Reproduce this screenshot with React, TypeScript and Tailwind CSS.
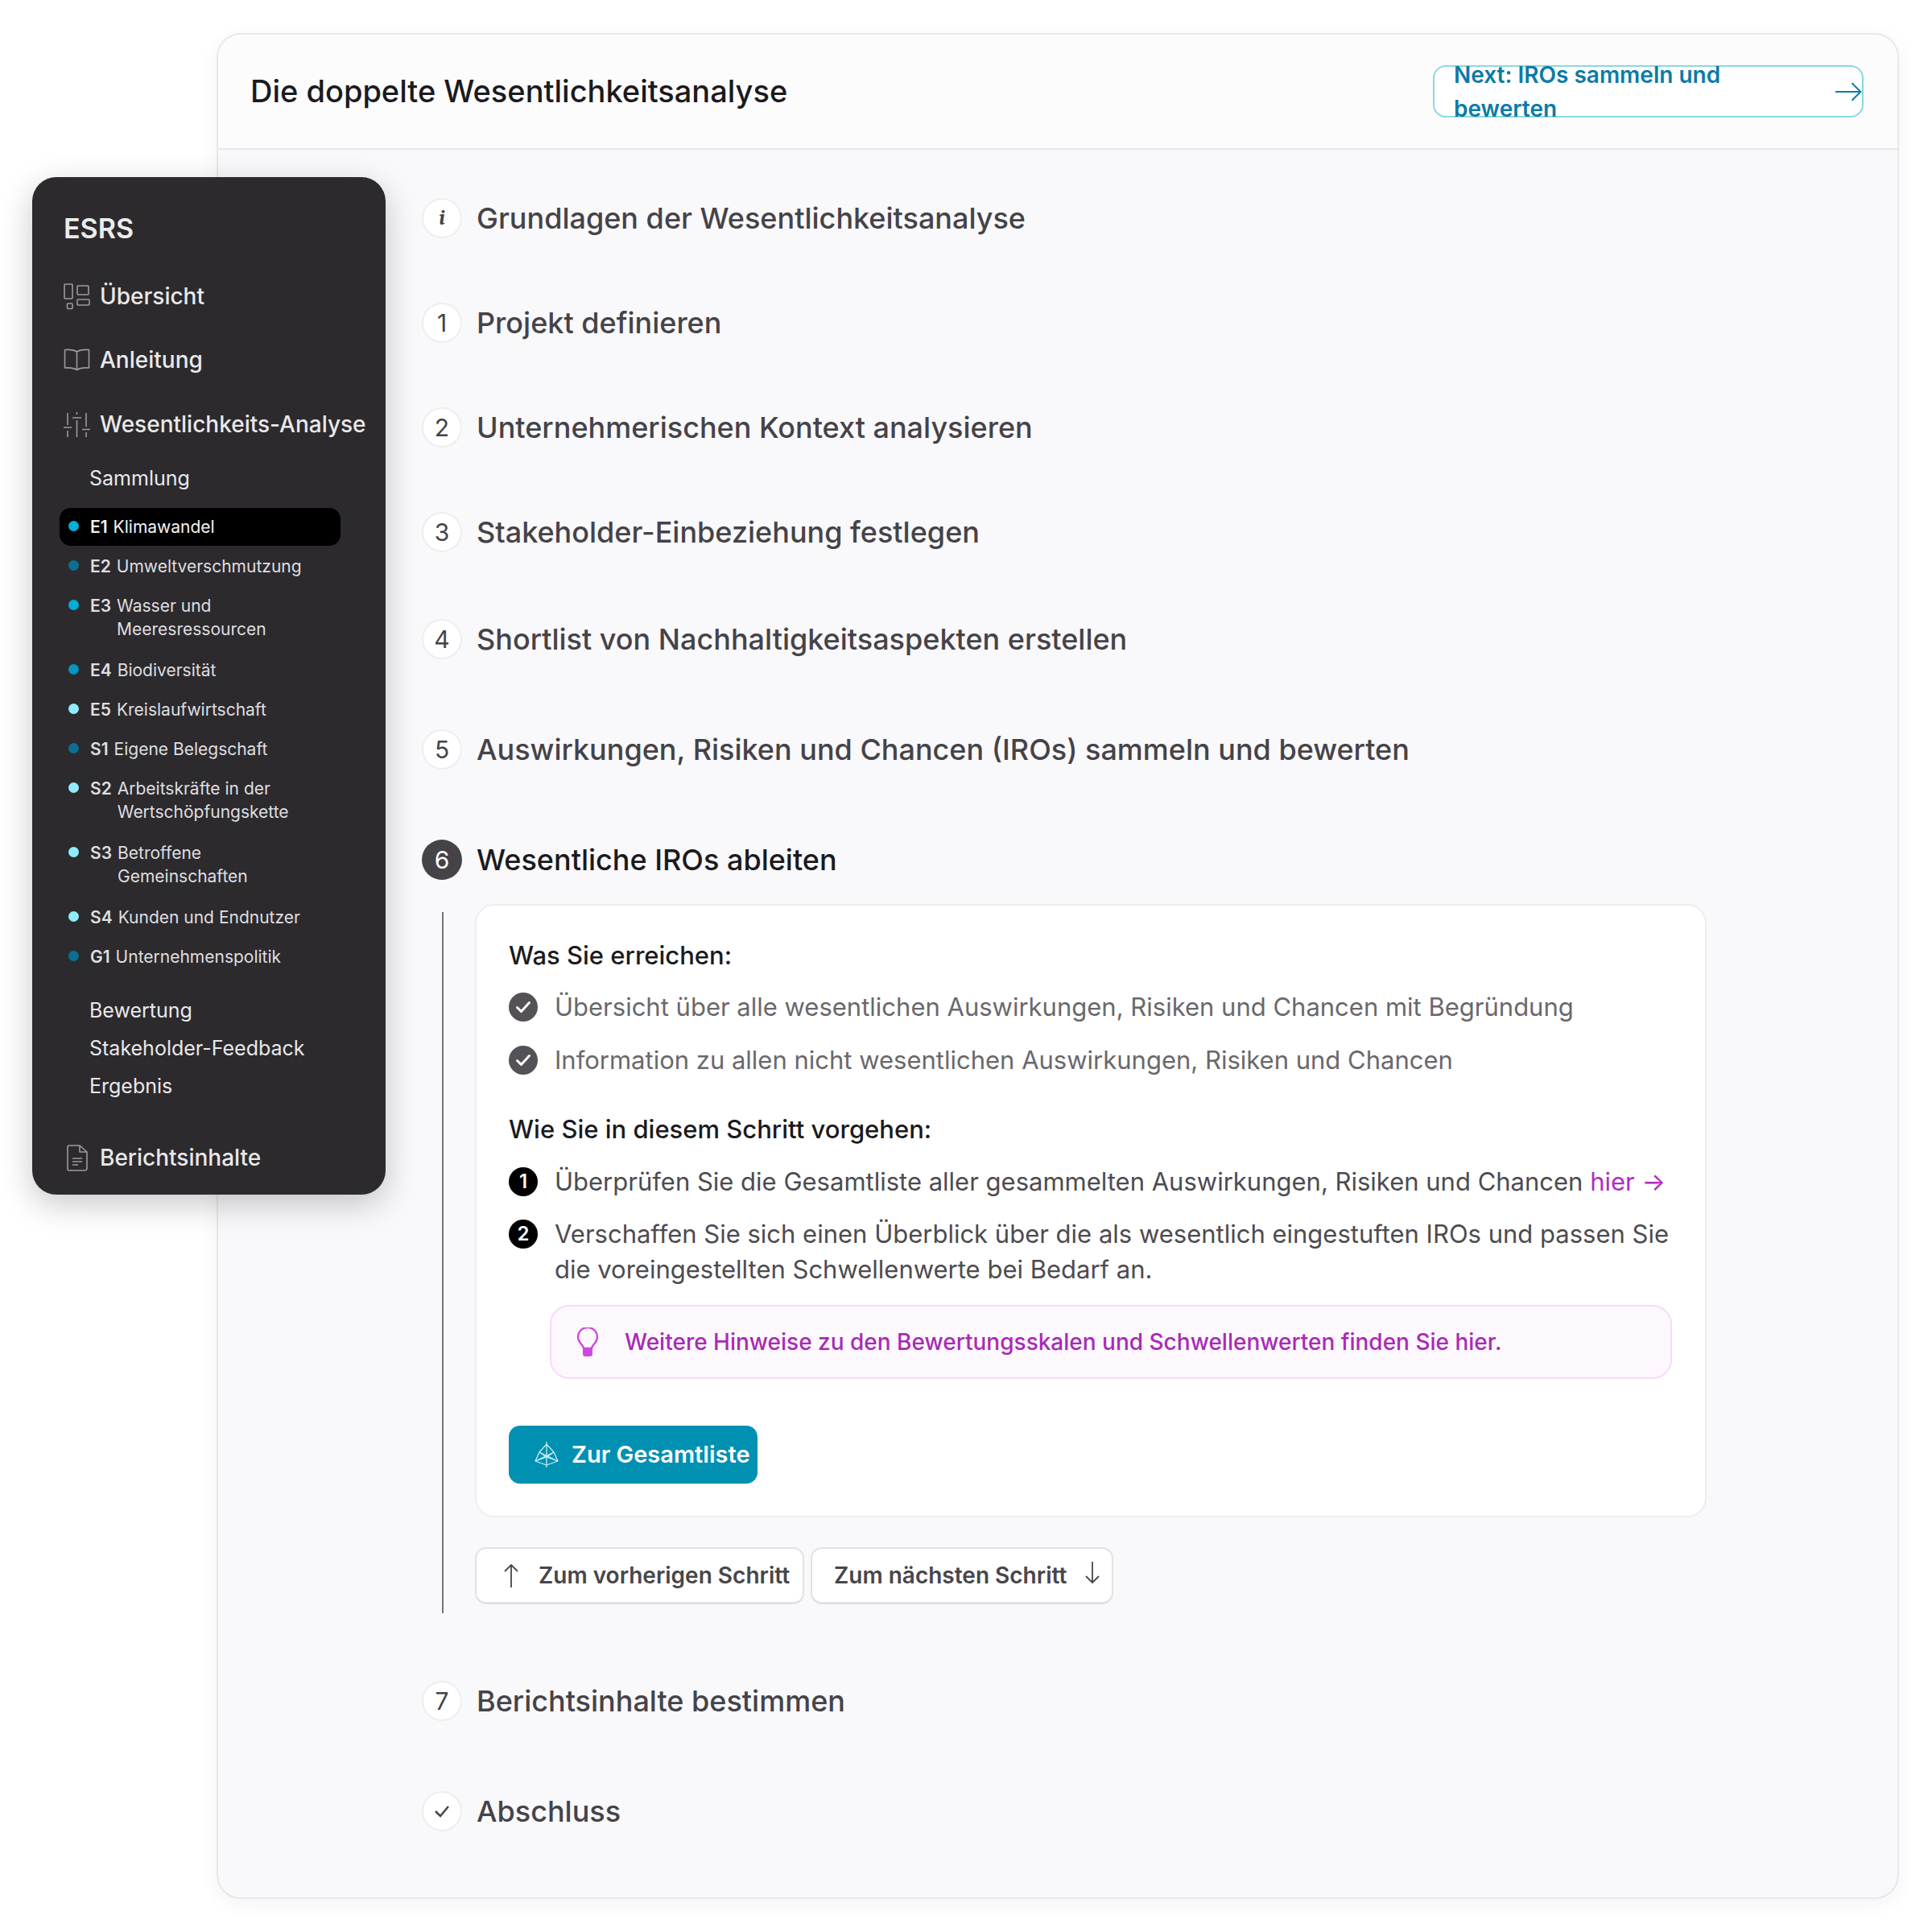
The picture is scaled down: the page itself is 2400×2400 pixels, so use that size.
import React from 'react';

const font = { fontFamily: 'Inter, "Noto Sans", sans-serif' };

function OverviewIcon() {
  return (
    <svg width="33" height="33" viewBox="0 0 33 33" fill="none" stroke="#9b9a9c" strokeWidth="1.6">
      <rect x="1" y="1" width="10" height="18" rx="1" />
      <rect x="4.5" y="25" width="6.5" height="6.5" rx="1" />
      <rect x="17" y="3" width="14" height="11" rx="1" />
      <rect x="17" y="20" width="15" height="7" rx="1" />
    </svg>
  );
}

function BookIcon() {
  return (
    <svg width="33" height="28" viewBox="0 0 33 28" fill="none" stroke="#9b9a9c" strokeWidth="1.6" strokeLinejoin="round">
      <path d="M16.5 4C13 1.5 8 1 1.5 1.5V24C8 23.5 13 24 16.5 26.500C20 24 25 23.500 31.500 24V1.500C25 1 20 1.500 16.500 4Z" />
      <path d="M16.500 4V26.500" />
    </svg>
  );
}

function SlidersIcon() {
  return (
    <svg width="33" height="31" viewBox="0 0 33 31" fill="none" stroke="#9b9a9c" strokeWidth="1.6">
      <path d="M5 1v15M5 23v8M16.500 0v3M16.500 10v21M28 1v17M28 25v6" />
      <path d="M0 19h10M11 7h11M23 21.500h10" />
    </svg>
  );
}

function FileIcon() {
  return (
    <svg width="26" height="33" viewBox="0 0 26 33" fill="none" stroke="#9b9a9c" strokeWidth="1.600" strokeLinejoin="round">
      <path d="M3 1h13l9 8v20a3 3 0 0 1-3 3H3a2 2 0 0 1-2-2V3a2 2 0 0 1 2-2Z" />
      <path d="M16 1v8h9M7 17h12M7 21h12M7 25h7" />
    </svg>
  );
}

function NavItem({ icon, label, className }: { icon: React.ReactNode; label: string; className: string }) {
  return (
    <div className={`flex items-center h-[40px] text-[28px] font-medium text-[#e9e8ea] ${className}`}>
      <span className="w-[45px] flex justify-center pr-[12px] shrink-0">{icon}</span>
      {label}
    </div>
  );
}

function TopicRow({ code, lines, dot, active, second }: { code: string; lines: string[]; dot: string; active?: boolean; second?: boolean }) {
  return (
    <div className={`flex px-[11px] py-[9px] gap-[14px] rounded-[14px] text-[21px] leading-[29px] text-[#dfdee0] ${active ? 'bg-black text-[#f2f2f2]' : ''} ${second ? 'h-[78px]' : 'h-[47px]'}`}>
      <span className={`w-[13px] h-[13px] rounded-full mt-[7px] shrink-0 ${dot}`} />
      <span className="font-semibold w-auto shrink-0">{code}</span>
      <span className="-ml-[7px]">
        {lines.map((l) => (
          <span key={l} className="block">{l}</span>
        ))}
      </span>
    </div>
  );
}

function Sidebar() {
  return (
    <aside className="absolute left-[40px] top-[220px] w-[439px] h-[1264px] rounded-[30px] bg-[#2c2a2d] shadow-[0_12px_40px_rgba(0,0,0,0.22)] pl-[39px] pt-[42px]">
      <div className="h-[44px] leading-[44px] text-[34px] font-semibold text-[#ececed]">ESRS</div>
      <NavItem icon={<OverviewIcon />} label="Übersicht" className="mt-[42px]" />
      <NavItem icon={<BookIcon />} label="Anleitung" className="mt-[39px]" />
      <NavItem icon={<SlidersIcon />} label="Wesentlichkeits-Analyse" className="mt-[40px]" />
      <div className="ml-[32px] mt-[29px] h-[36px] leading-[36px] text-[25px] font-normal text-[#e9e8ea]">Sammlung</div>
      <div className="-ml-[5px] mt-[19px] w-[349px] flex flex-col gap-[2px]">
        <TopicRow code="E1" lines={['Klimawandel']} dot="bg-[#03aed6]" active />
        <TopicRow code="E2" lines={['Umweltverschmutzung']} dot="bg-[#0b6f93]" />
        <TopicRow code="E3" lines={['Wasser und', 'Meeresressourcen']} dot="bg-[#03aed6]" second />
        <TopicRow code="E4" lines={['Biodiversität']} dot="bg-[#0495c3]" />
        <TopicRow code="E5" lines={['Kreislaufwirtschaft']} dot="bg-[#90ecfb]" />
        <TopicRow code="S1" lines={['Eigene Belegschaft']} dot="bg-[#0b6f93]" />
        <TopicRow code="S2" lines={['Arbeitskräfte in der', 'Wertschöpfungskette']} dot="bg-[#90ecfb]" second />
        <TopicRow code="S3" lines={['Betroffene', 'Gemeinschaften']} dot="bg-[#90ecfb]" second />
        <TopicRow code="S4" lines={['Kunden und Endnutzer']} dot="bg-[#90ecfb]" />
        <TopicRow code="G1" lines={['Unternehmenspolitik']} dot="bg-[#0b6f93]" />
      </div>
      <div className="ml-[32px] mt-[25px] flex flex-col gap-[11px] text-[25px] leading-[36px] text-[#e9e8ea]">
        <div>Bewertung</div>
        <div>Stakeholder-Feedback</div>
        <div>Ergebnis</div>
      </div>
      <NavItem icon={<FileIcon />} label="Berichtsinhalte" className="mt-[51px]" />
    </aside>
  );
}

function Step({ mark, title, className, active }: { mark: React.ReactNode; title: string; className?: string; active?: boolean }) {
  return (
    <div className={`flex items-center h-[50px] gap-[18px] ${className ?? ''}`}>
      <span className={`w-[50px] h-[50px] rounded-full flex items-center justify-center text-[30px] ${active ? 'bg-[#454347] text-white' : 'bg-white text-[#454347] border-2 border-[#eeedf0]'}`}>
        {mark}
      </span>
      <span className={`text-[36px] font-medium ${active ? 'text-[#1b1a1d]' : 'text-[#454347]'}`}>{title}</span>
    </div>
  );
}

function CheckRow({ text, className }: { text: string; className: string }) {
  return (
    <div className={`flex items-center h-[44px] gap-[21px] text-[31px] text-[#6a686c] ${className}`}>
      <span className="w-[36px] h-[36px] rounded-full bg-[#545256] flex items-center justify-center shrink-0">
        <svg width="20" height="16" viewBox="0 0 20 16" fill="none" stroke="white" strokeWidth="3" strokeLinecap="round" strokeLinejoin="round">
          <path d="M2.500 8.500 7.500 13.500 17.500 2.500" />
        </svg>
      </span>
      {text}
    </div>
  );
}

function NumberBadge({ n }: { n: number }) {
  return (
    <span className="w-[36px] h-[36px] rounded-full bg-black text-white flex items-center justify-center text-[24px] font-semibold shrink-0">{n}</span>
  );
}

function GemIcon() {
  return (
    <svg width="30" height="32" viewBox="0 0 30 32" fill="none" stroke="#c5eef5" strokeWidth="1.300" strokeLinejoin="round">
      <path d="M15 0v32M15 3 24 13 29 24 15 29 1 24 6 13Z" />
      <path d="M1 24 24 13M29 24 6 13M6 13 15 19 24 13M1 24 15 19 29 24" />
    </svg>
  );
}

function BulbIcon() {
  return (
    <svg width="28" height="37" viewBox="0 0 28 37" fill="none">
      <path d="M9 26c0-4-7-7-7-14a12 12 0 0 1 24 0c0 7-7 10-7 14H9Z" stroke="#cc4ada" strokeWidth="2.400" strokeLinejoin="round" />
      <path d="M8 26h12v7a3 3 0 0 1-3 3h-6a3 3 0 0 1-3-3v-7Z" fill="#cc4ada" />
    </svg>
  );
}

function StepDetail() {
  return (
    <div className="flex mt-[30px] pl-[25px] pb-[11px]">
      <div className="w-[2px] mt-[10px] -mb-[11px] bg-[#77757a] shrink-0" />
      <div className="ml-[39px]">
        <div className="w-[1530px] h-[762px] rounded-[24px] bg-white border-2 border-[#eeedf0] pl-[40px] pt-[40px]">
          <div className="h-[44px] flex items-center text-[31px] font-medium text-[#1b1a1d]">Was Sie erreichen:</div>
          <CheckRow className="mt-[20px]" text="Übersicht über alle wesentlichen Auswirkungen, Risiken und Chancen mit Begründung" />
          <CheckRow className="mt-[22px]" text="Information zu allen nicht wesentlichen Auswirkungen, Risiken und Chancen" />
          <div className="mt-[42px] h-[44px] flex items-center text-[31px] font-medium text-[#1b1a1d]">Wie Sie in diesem Schritt vorgehen:</div>
          <div className="mt-[21px] flex items-center h-[44px] gap-[21px] text-[31px] text-[#4d4b4f]">
            <NumberBadge n={1} />
            <span>
              Überprüfen Sie die Gesamtliste aller gesammelten Auswirkungen, Risiken und Chancen{' '}
              <span className="text-[#b02dc0]">hier -&gt;</span>
            </span>
          </div>
          <div className="mt-[21px] flex gap-[21px] text-[31px] leading-[44px] text-[#4d4b4f]">
            <span className="mt-[4px]"><NumberBadge n={2} /></span>
            <span className="w-[1420px]">
              Verschaffen Sie sich einen Überblick über die als wesentlich eingestuften IROs und passen Sie die voreingestellten Schwellenwerte bei Bedarf an.
            </span>
          </div>
          <div className="mt-[22px] ml-[51px] w-[1394px] h-[92px] rounded-[24px] bg-[#fdf8fe] border-2 border-[#f8d9fb] flex items-center pl-[31px] gap-[32px] text-[28px] font-medium text-[#a82bb5]">
            <BulbIcon />
            Weitere Hinweise zu den Bewertungsskalen und Schwellenwerten finden Sie hier.
          </div>
          <div className="mt-[58px] w-[309px] h-[72px] rounded-[14px] bg-[#0090b2] flex items-center pl-[32px] gap-[16px] text-[29px] font-semibold text-white">
            <GemIcon />
            Zur Gesamtliste
          </div>
        </div>
        <div className="mt-[37px] flex gap-[8px] text-[28px] font-semibold text-[#48464a]">
          <div className="w-[409px] h-[71px] rounded-[14px] bg-white border-2 border-[#e2e1e4] border-b-[3px] flex items-center pl-[33px] gap-[24px]">
            <svg width="20" height="30" viewBox="0 0 20 30" fill="none" stroke="#48464a" strokeWidth="1.800"><path d="M10 30V2M2 10 10 2l8 8" /></svg>
            Zum vorherigen Schritt
          </div>
          <div className="w-[376px] h-[71px] rounded-[14px] bg-white border-2 border-[#e2e1e4] border-b-[3px] flex items-center pl-[27px] gap-[22px]">
            Zum nächsten Schritt
            <svg width="20" height="28" viewBox="0 0 20 28" fill="none" stroke="#48464a" strokeWidth="1.800" className="-mt-[6px]"><path d="M10 0v26M2 18l8 8 8-8" /></svg>
          </div>
        </div>
      </div>
    </div>
  );
}

export default function App() {
  return (
    <div className="relative w-[2400px] h-[2400px] bg-white pt-[41px] pl-[269px]" style={font}>
      <main className="w-[2090px] h-[2318px] rounded-[30px] border-2 border-[#e8e7ea] bg-[#f9f8fb] shadow-[0_6px_24px_rgba(0,0,0,0.05)] overflow-hidden">
        <header className="h-[143px] bg-[#fdfcfd] border-b-2 border-[#e8e7ea] flex items-center justify-between pl-[40px] pr-[42px]">
          <h1 className="text-[38px] font-medium text-[#1b1a1d]">Die doppelte Wesentlichkeitsanalyse</h1>
          <div className="w-[535px] h-[65px] rounded-[16px] border-2 border-[#8bd8e0] bg-white flex items-center pl-[24px] gap-[17px] text-[28px] font-semibold text-[#0b7ba6]">
            Next: IROs sammeln und bewerten
            <svg width="34" height="26" viewBox="0 0 34 26" fill="none" stroke="#0b7ba6" strokeWidth="2"><path d="M0 13h32M21 2l11 11-11 11" /></svg>
          </div>
        </header>
        <div className="pl-[253px] pt-[60px]">
          <Step mark={<span className="italic font-serif font-bold text-[26px]">i</span>} title="Grundlagen der Wesentlichkeitsanalyse" />
          <Step mark="1" title="Projekt definieren" className="mt-[80px]" />
          <Step mark="2" title="Unternehmerischen Kontext analysieren" className="mt-[80px]" />
          <Step mark="3" title="Stakeholder-Einbeziehung festlegen" className="mt-[80px]" />
          <Step mark="4" title="Shortlist von Nachhaltigkeitsaspekten erstellen" className="mt-[83px]" />
          <Step mark="5" title="Auswirkungen, Risiken und Chancen (IROs) sammeln und bewerten" className="mt-[87px]" />
          <Step mark="6" title="Wesentliche IROs ableiten" className="mt-[87px]" active />
          <StepDetail />
          <Step mark="7" title="Berichtsinhalte bestimmen" className="mt-[84px]" />
          <Step
            mark={
              <svg width="20" height="16" viewBox="0 0 20 16" fill="none" stroke="#454347" strokeWidth="2.500"><path d="M2 8l6 6L18 2" /></svg>
            }
            title="Abschluss"
            className="mt-[87px]"
          />
        </div>
      </main>
      <Sidebar />
    </div>
  );
}
